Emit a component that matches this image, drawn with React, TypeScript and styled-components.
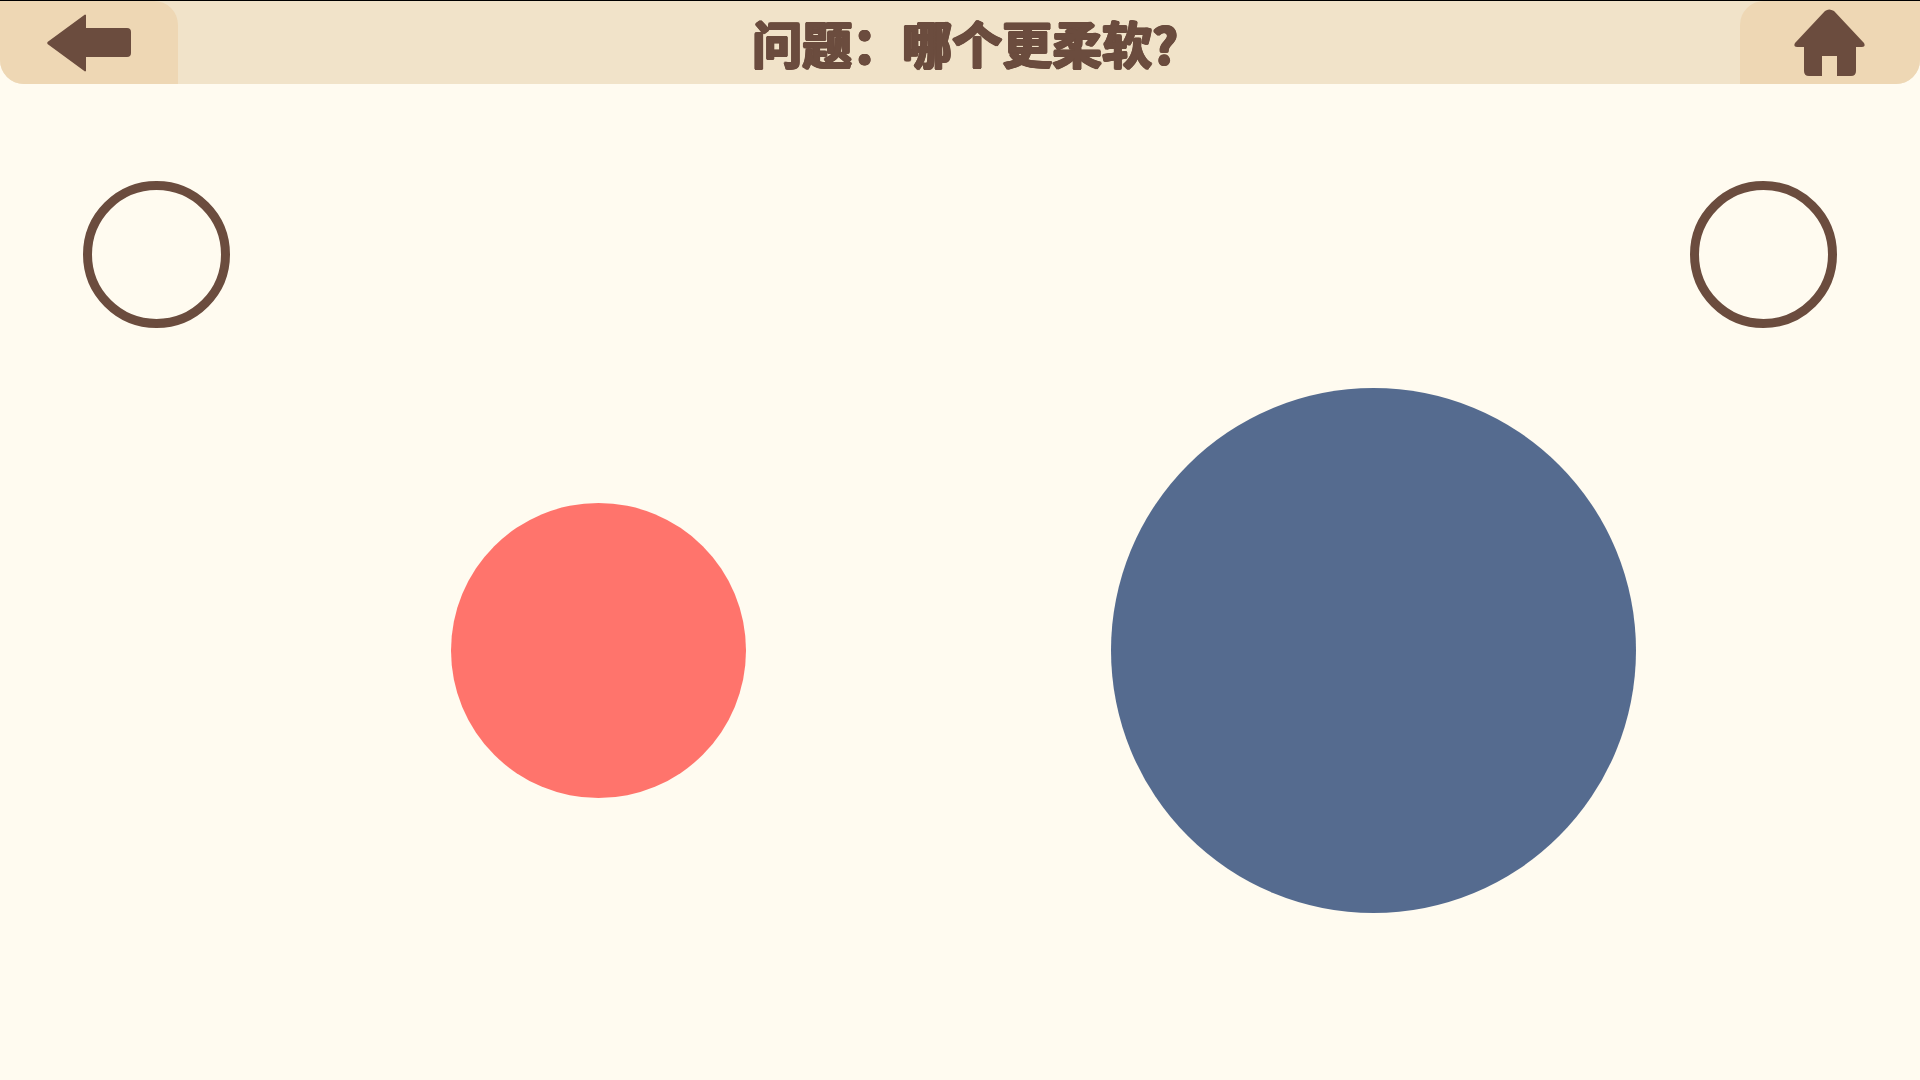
import * as React from 'react';
import styled, { createGlobalStyle } from 'styled-components';

const brown = '#6b4c3e';

const Global = createGlobalStyle`
  html, body {
    margin: 0;
    padding: 0;
    background: #fffbf0;
  }
`;

const S = {
  Page: styled.div`
    width: 1920px;
    height: 1080px;
    overflow: hidden;
    background: #fffbf0;
    border-top: 1px solid #000;
    box-sizing: border-box;
  `,
  Header: styled.header`
    height: 83px;
    display: flex;
    align-items: center;
    justify-content: space-between;
    background: #f1e3c9;
    border-radius: 0 0 24px 24px;
  `,
  CornerButton: styled.div<{ $side: 'left' | 'right' }>`
    width: ${(p) => (p.$side === 'left' ? '178px' : '180px')};
    height: 83px;
    display: flex;
    align-items: center;
    justify-content: center;
    background: #eed7b4;
    border-radius: ${(p) => (p.$side === 'left' ? '0 24px 0 24px' : '24px 0 24px 0')};
  `,
  Title: styled.h1`
    margin: 0 0 0 12px;
    font-family: 'Noto Sans CJK SC', 'Noto Sans', sans-serif;
    font-size: 50px;
    line-height: 83px;
    font-weight: 700;
    color: ${brown};
    white-space: nowrap;
    text-shadow:
      1.3px 0 0 ${brown},
      -1.3px 0 0 ${brown},
      0 1.3px 0 ${brown},
      0 -1.3px 0 ${brown},
      0.9px 0.9px 0 ${brown},
      -0.9px 0.9px 0 ${brown},
      0.9px -0.9px 0 ${brown},
      -0.9px -0.9px 0 ${brown};
  `,
  RingRow: styled.div`
    display: flex;
    justify-content: space-between;
    padding: 97px 83px 0;
  `,
  Ring: styled.div`
    width: 147px;
    height: 147px;
    box-sizing: border-box;
    border: 9px solid ${brown};
    border-radius: 50%;
  `,
  ShapeRow: styled.div`
    display: flex;
    align-items: center;
    gap: 365px;
    padding: 60px 0 0 451px;
  `,
  Shape: styled.div<{ $size: number; $color: string }>`
    width: ${(p) => p.$size}px;
    height: ${(p) => p.$size}px;
    border-radius: 50%;
    background: ${(p) => p.$color};
  `
};

const BackIcon: React.FC = () => (
  <svg width="84" height="58" viewBox="0 0 84 58">
    <path
      d="M38 0.5 L39 1 V14 H80 Q84 14 84 18 V39 Q84 43 80 43 H39 V57 L38 57.5 L0.5 30 Q0 29 0.5 28 Z"
      fill={brown}
    />
  </svg>
);

const HomeIcon: React.FC = () => (
  <svg width="71" height="67" viewBox="0 0 71 67">
    <path
      d="M31 2 Q35 -1 40 2 L70 34 Q72 38 68 38 H62 V62 Q62 67 57 67 H43 V47 H28 V67 H15 Q10 67 10 62 V38 H3 Q-1 38 1 34 Z"
      fill={brown}
    />
  </svg>
);

const App: React.FC = () => {
  return (
    <S.Page>
      <Global />
      <S.Header>
        <S.CornerButton $side="left">
          <BackIcon />
        </S.CornerButton>
        <S.Title>问题：哪个更柔软?</S.Title>
        <S.CornerButton $side="right">
          <HomeIcon />
        </S.CornerButton>
      </S.Header>
      <S.RingRow>
        <S.Ring />
        <S.Ring />
      </S.RingRow>
      <S.ShapeRow>
        <S.Shape $size={295} $color="#ff746c" />
        <S.Shape $size={525} $color="#556b8f" />
      </S.ShapeRow>
    </S.Page>
  );
};

export default App;
